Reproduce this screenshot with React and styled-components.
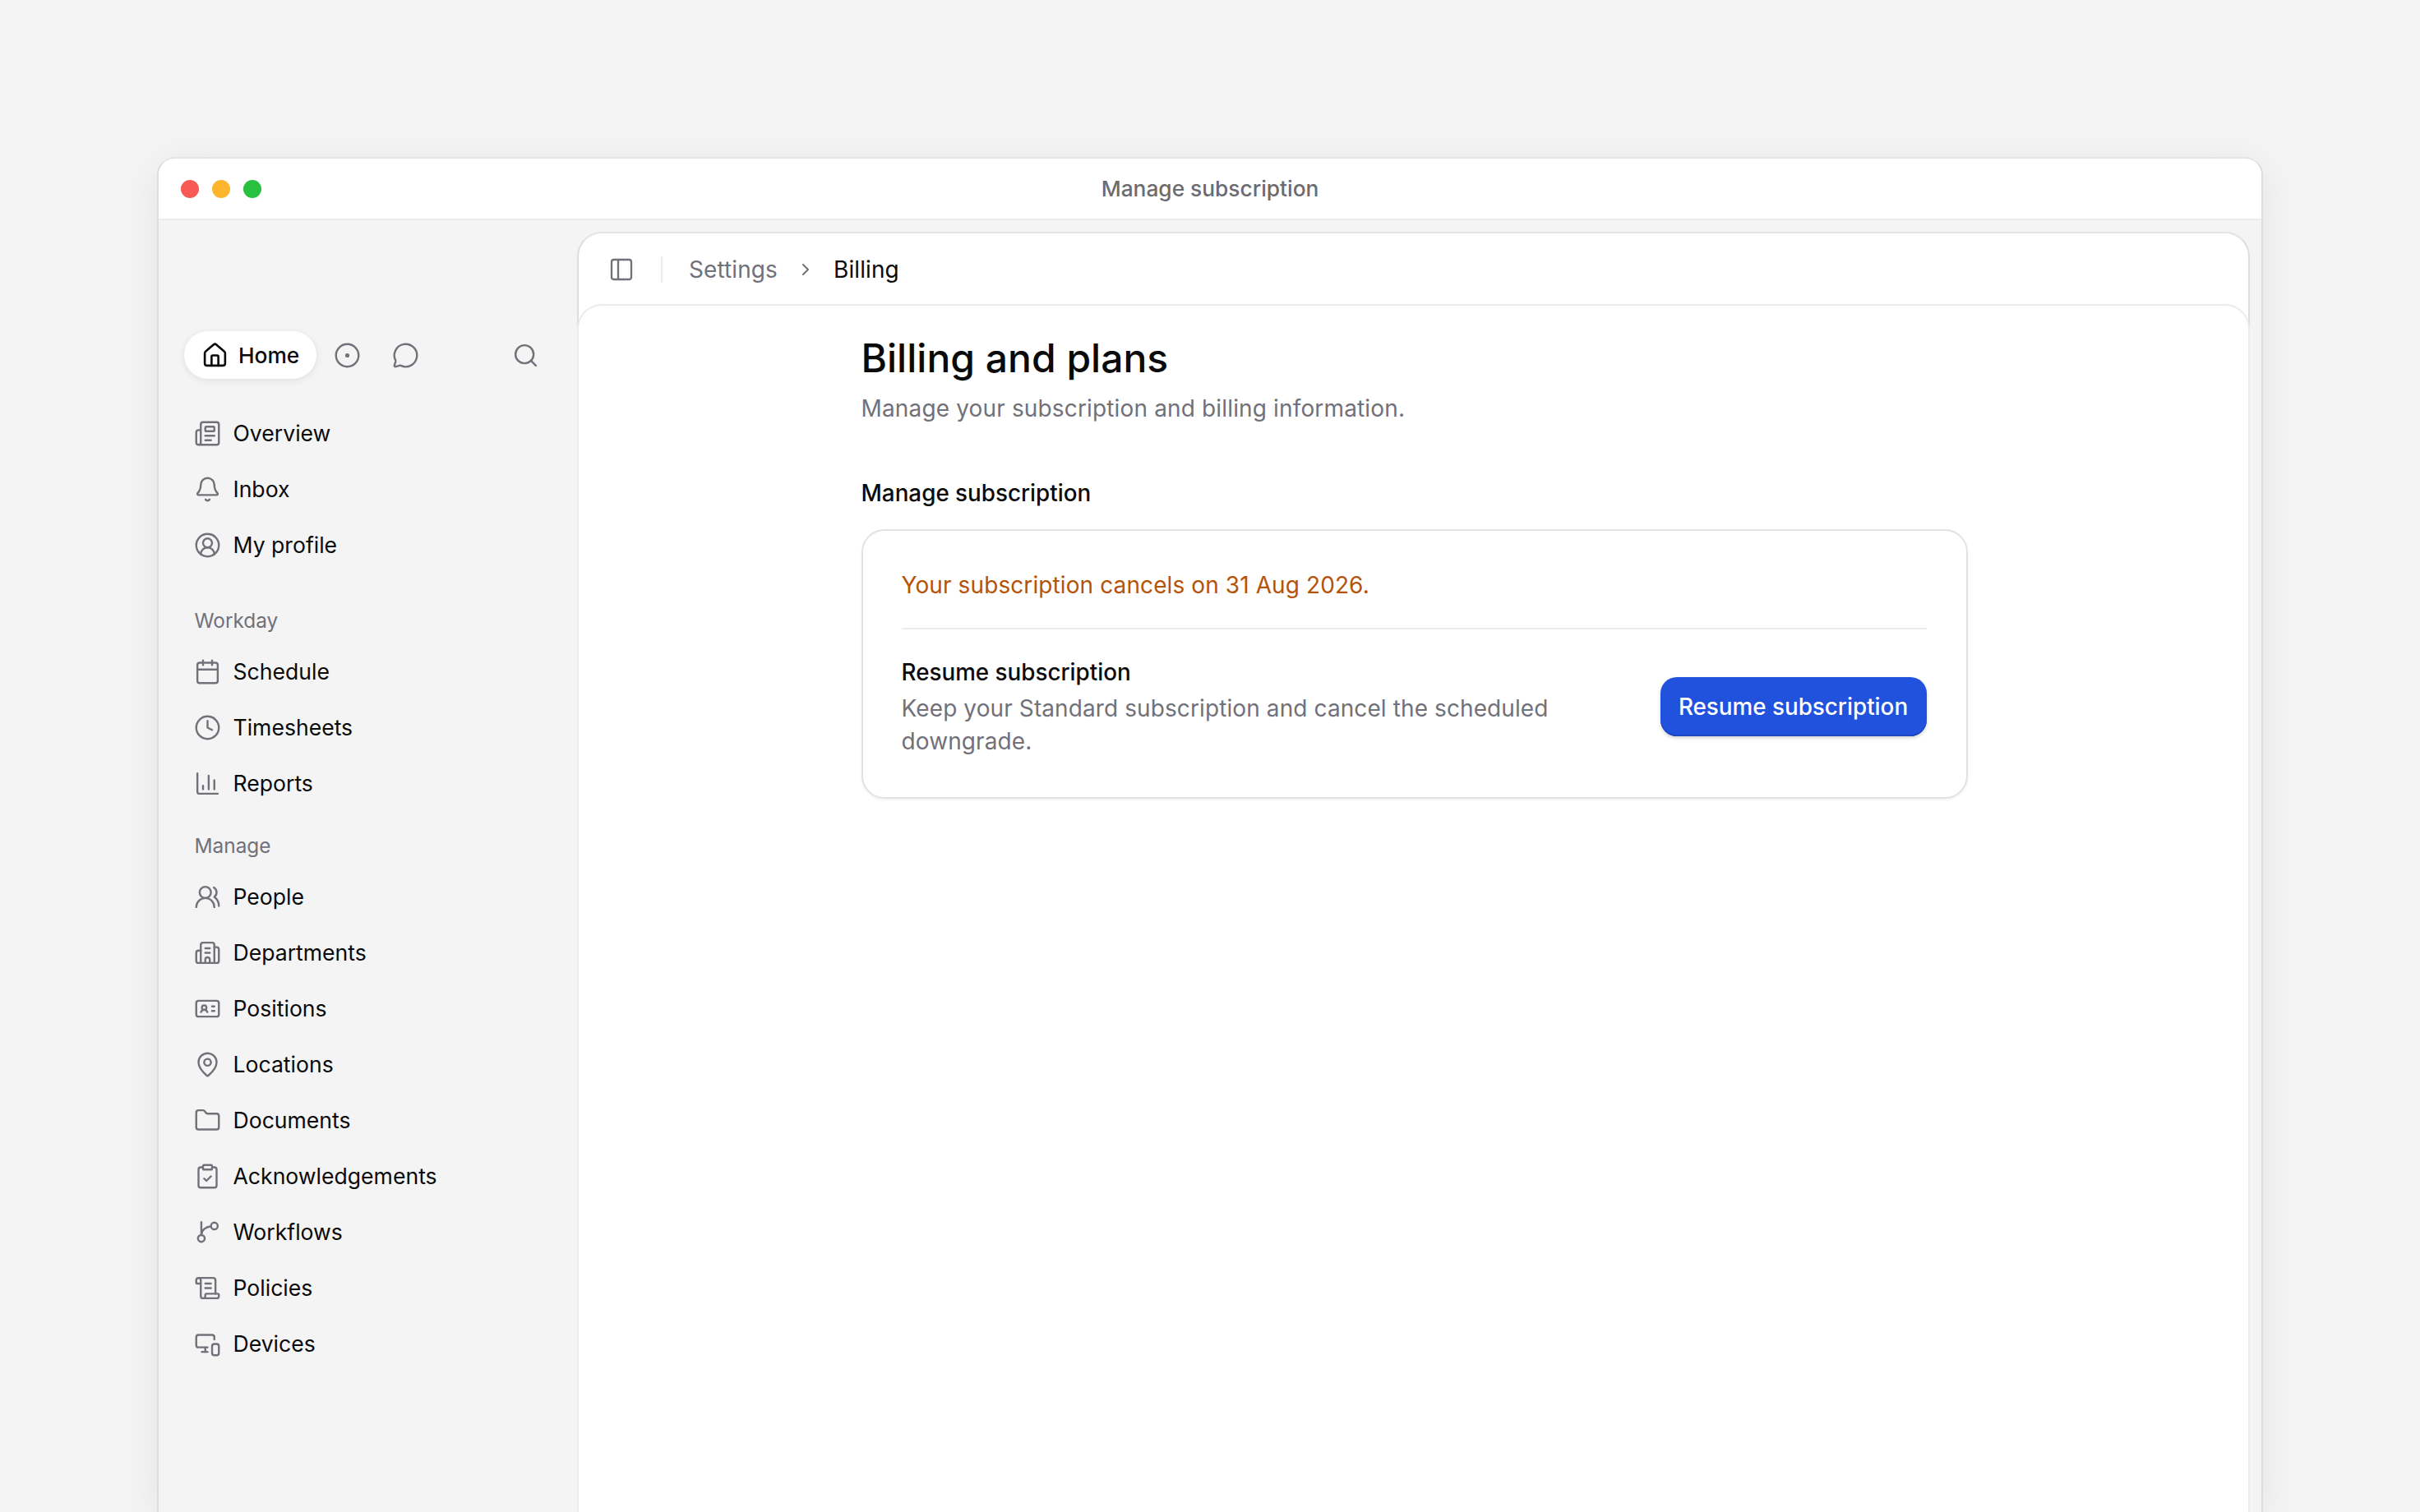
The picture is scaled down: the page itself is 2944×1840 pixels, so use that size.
import React from 'react';
import styled, { createGlobalStyle } from 'styled-components';
import {
  House, CircleDot, MessageCircle, Search, Newspaper, Bell, CircleUserRound,
  Calendar, Clock, ChartColumn, UsersRound, Building2, IdCard, MapPin, Folder,
  ClipboardCheck, ScrollText, MonitorSmartphone, PanelLeft, ChevronRight,
} from 'lucide-react';

const GlobalStyle = createGlobalStyle`
  html, body { margin: 0; height: 100%; background: #f4f4f4; }
  #root { height: 100%; }
  * { box-sizing: border-box; }
  body {
    font-family: Inter, "Liberation Sans", sans-serif;
    font-size: 28px;
    color: #0a0a0a;
    -webkit-font-smoothing: antialiased;
  }
`;

const Page = styled.div`
  height: 100vh;
  overflow: hidden;
  padding: 191px 191px 0 191px;
`;

const Window = styled.div`
  height: 100%;
  display: flex;
  flex-direction: column;
  background: #f4f4f4;
  border: 2px solid #dddddd;
  border-top-color: #e4e4e4;
  border-bottom: 0;
  border-radius: 22px 22px 0 0;
  box-shadow: 0 8px 50px rgba(0, 0, 0, 0.07);
`;

const TitleBar = styled.div`
  position: relative;
  flex: none;
  height: 75px;
  display: flex;
  align-items: center;
  justify-content: center;
  background: #fff;
  border-bottom: 2px solid #ececec;
  border-radius: 20px 20px 0 0;
  color: #6b6b70;
  font-size: 26.3px;
  font-weight: 500;
`;

const Lights = styled.div`
  position: absolute;
  left: 27px;
  top: 26px;
  display: flex;
  gap: 16px;
`;

const Light = styled.span`
  width: 22px;
  height: 22px;
  border-radius: 50%;
  background: ${(p) => p.$color};
`;

const Body = styled.div`
  flex: 1;
  min-height: 0;
  display: flex;
`;

const Sidebar = styled.aside`
  flex: none;
  width: 509px;
  padding: 135px 31px 0 31px;
`;

const Tabs = styled.div`
  display: flex;
  align-items: center;
  height: 58px;
  margin-bottom: 32px;
`;

const HomeTab = styled.div`
  display: flex;
  align-items: center;
  gap: 12px;
  height: 58px;
  padding: 0 21px 0 21px;
  border-radius: 29px;
  background: #fff;
  box-shadow: 0 2px 8px rgba(0, 0, 0, 0.09);
  font-size: 26.3px;
  font-weight: 500;
  svg { color: #0a0a0a; }
`;

const TabIcon = styled.span`
  display: flex;
  color: #71717a;
  margin-left: ${(p) => p.$gap}px;
`;

const Group = styled.div`
  margin-bottom: ${(p) => p.$after || 0}px;
`;

const GroupLabel = styled.div`
  height: 34px;
  padding-left: 12.5px;
  margin-bottom: 11px;
  display: flex;
  align-items: center;
  color: #71717a;
  font-size: 24.4px;
  font-weight: 400;
`;

const NavItem = styled.div`
  height: 68px;
  padding-left: 11.5px;
  display: flex;
  align-items: center;
  gap: 15px;
  font-size: 26.6px;
  font-weight: 400;
  svg { flex: none; color: #71717a; }
`;

const Main = styled.main`
  flex: 1;
  min-width: 0;
  margin: 14px 14px 0 0;
  display: flex;
  flex-direction: column;
  background: #fff;
  border: 2px solid #dddddd;
  border-top-color: #e4e4e4;
  border-bottom: 0;
  border-radius: 30px 30px 0 0;
`;

const Toolbar = styled.div`
  flex: none;
  height: 86px;
  display: flex;
  align-items: center;
  padding: 2px 0 0 36px;
  svg { color: #71717a; }
`;

const Divider = styled.span`
  width: 2px;
  height: 32px;
  margin: 0 32px 0 32px;
  background: #ececec;
`;

const Crumb = styled.span`
  color: ${(p) => (p.$current ? '#0a0a0a' : '#71717a')};
  font-weight: 400;
  letter-spacing: 0.1px;
`;

const CrumbSep = styled.span`
  display: flex;
  margin: 0 22px;
`;

const Content = styled.div`
  flex: 1;
  padding-left: 2px;
  border-top: 2px solid #ececec;
  border-radius: 30px 30px 0 0;
  margin: 0 -2px;
  border-left: 2px solid #ececec;
  border-right: 2px solid #ececec;
`;

const Column = styled.div`
  width: 1346px;
  margin: 0 auto;
  padding-top: 30px;
`;

const Title = styled.h1`
  margin: 0;
  font-size: 48px;
  line-height: 68px;
  font-weight: 500;
`;

const Subtitle = styled.p`
  margin: 7px 0 0;
  color: #71717a;
  line-height: 40px;
  letter-spacing: 0.15px;
`;

const SectionTitle = styled.h2`
  margin: 63px 0 0;
  font-size: 27.8px;
  line-height: 40px;
  font-weight: 500;
`;

const Card = styled.section`
  margin-top: 24px;
  padding: 0 48px 0 47px;
  border: 2px solid #e2e2e2;
  border-radius: 28px;
  box-shadow: 0 2px 3px rgba(0, 0, 0, 0.05);
  height: 328px;
`;

const Notice = styled.div`
  height: 120px;
  display: flex;
  align-items: center;
  padding-top: 13px;
  border-bottom: 2px solid #ececec;
  color: #b45309;
  letter-spacing: 0.1px;
`;

const ActionRow = styled.div`
  display: flex;
  align-items: center;
  justify-content: space-between;
  padding-top: 32px;
`;

const ActionText = styled.div`
  width: 860px;
`;

const ActionTitle = styled.div`
  font-size: 27.8px;
  line-height: 40px;
  font-weight: 500;
`;

const ActionDesc = styled.p`
  margin: 5px 0 0;
  color: #71717a;
  line-height: 39.5px;
  letter-spacing: 0.1px;
`;

const PrimaryButton = styled.button`
  flex: none;
  width: 324px;
  height: 72px;
  border: 0;
  border-radius: 20px;
  background: #2152dd;
  color: #fff;
  font: inherit;
  font-size: 27.8px;
  font-weight: 500;
  box-shadow: inset 0 -2px 0 #1c46c0, 0 2px 4px rgba(0, 0, 0, 0.18);
`;

// lucide's git-branch curves the other way, so this one is drawn by hand
const WorkflowIcon = ({ size, strokeWidth }) => (
  <svg
    width={size}
    height={size}
    viewBox="0 0 24 24"
    fill="none"
    stroke="currentColor"
    strokeWidth={strokeWidth}
    strokeLinecap="round"
    strokeLinejoin="round"
  >
    <path d="M6.5 3v11.2" />
    <circle cx="6.5" cy="17.5" r="3" />
    <circle cx="18" cy="6.5" r="3" />
    <path d="M15 6.8C10.5 7.2 7 10 6.5 14" />
  </svg>
);

const topItems = [
  [Newspaper, 'Overview'],
  [Bell, 'Inbox'],
  [CircleUserRound, 'My profile'],
];

const workdayItems = [
  [Calendar, 'Schedule'],
  [Clock, 'Timesheets'],
  [ChartColumn, 'Reports'],
];

const manageItems = [
  [UsersRound, 'People'],
  [Building2, 'Departments'],
  [IdCard, 'Positions'],
  [MapPin, 'Locations'],
  [Folder, 'Documents'],
  [ClipboardCheck, 'Acknowledgements'],
  [WorkflowIcon, 'Workflows'],
  [ScrollText, 'Policies'],
  [MonitorSmartphone, 'Devices'],
];

const NavList = ({ items }) =>
  items.map(([Icon, label]) => (
    <NavItem key={label}>
      <Icon size={33} strokeWidth={1.75} />
      {label}
    </NavItem>
  ));

export default function App() {
  return (
    <Page>
      <GlobalStyle />
      <Window>
        <TitleBar>
          <Lights>
            <Light $color="#f85952" />
            <Light $color="#fdb52d" />
            <Light $color="#27c03f" />
          </Lights>
          Manage subscription
        </TitleBar>
        <Body>
          <Sidebar>
            <Tabs>
              <HomeTab>
                <House size={33} strokeWidth={1.9} />
                Home
              </HomeTab>
              <TabIcon $gap={21}><CircleDot size={33} strokeWidth={1.75} /></TabIcon>
              <TabIcon $gap={38}><MessageCircle size={33} strokeWidth={1.75} /></TabIcon>
              <TabIcon $gap={113}><Search size={33} strokeWidth={1.75} /></TabIcon>
            </Tabs>
            <Group $after={41}>
              <NavList items={topItems} />
            </Group>
            <Group $after={25}>
              <GroupLabel>Workday</GroupLabel>
              <NavList items={workdayItems} />
            </Group>
            <Group>
              <GroupLabel>Manage</GroupLabel>
              <NavList items={manageItems} />
            </Group>
          </Sidebar>
          <Main>
            <Toolbar>
              <PanelLeft size={32} strokeWidth={1.75} />
              <Divider />
              <Crumb>Settings</Crumb>
              <CrumbSep><ChevronRight size={24} strokeWidth={2} /></CrumbSep>
              <Crumb $current>Billing</Crumb>
            </Toolbar>
            <Content>
              <Column>
                <Title>Billing and plans</Title>
                <Subtitle>Manage your subscription and billing information.</Subtitle>
                <SectionTitle>Manage subscription</SectionTitle>
                <Card>
                  <Notice>Your subscription cancels on 31 Aug 2026.</Notice>
                  <ActionRow>
                    <ActionText>
                      <ActionTitle>Resume subscription</ActionTitle>
                      <ActionDesc>Keep your Standard subscription and cancel the scheduled downgrade.</ActionDesc>
                    </ActionText>
                    <PrimaryButton>Resume subscription</PrimaryButton>
                  </ActionRow>
                </Card>
              </Column>
            </Content>
          </Main>
        </Body>
      </Window>
    </Page>
  );
}
